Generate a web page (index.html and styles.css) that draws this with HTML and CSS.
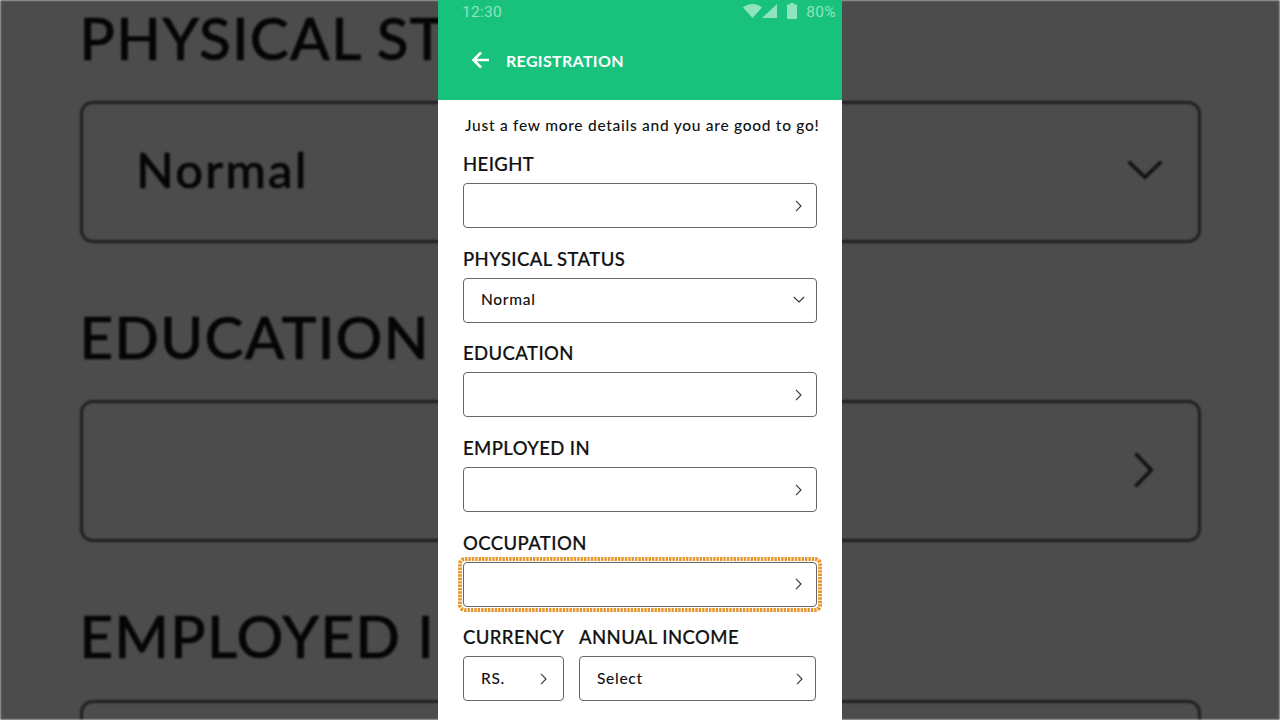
FILE: index.html
```html
<!DOCTYPE html>
<html lang="en">
<head>
    <meta charset="UTF-8">
    <meta name="viewport" content="width=device-width, initial-scale=1.0">
    <title>Registration</title>
    <link rel="stylesheet" href="styles.css">
</head>
<body>

<div class="page">

    <!-- blurred enlarged copy of the form behind the phone -->
    <div class="backdrop">
        <div class="form form-large">
            <p class="label">PHYSICAL ST</p>
            <div class="box">
                <span>Normal</span>
                <svg class="icon" viewBox="0 0 12 12"><path d="M.8 3l5.200 5 5.200-5"/></svg>
            </div>
            <p class="label">EDUCATION</p>
            <div class="box">
                <svg class="icon" viewBox="0 0 12 12"><path d="M3 .8l5 5.200-5 5.200"/></svg>
            </div>
            <p class="label">EMPLOYED I</p>
            <div class="box">
                <svg class="icon" viewBox="0 0 12 12"><path d="M3 .8l5 5.200-5 5.200"/></svg>
            </div>
        </div>
    </div>

    <main class="phone">
        <header class="appbar">
            <div class="status">
                <span>12:30</span>
                <div class="status-right">
                    <svg class="wifi" viewBox="0 0 19 14"><path d="M0 3.500C2.500 1.300 5.800 0 9.500 0s7 1.300 9.500 3.500L9.500 14z"/></svg>
                    <svg class="signal" viewBox="0 0 15 14"><path d="M15 0v14H0z"/></svg>
                    <svg class="battery" viewBox="0 0 10 16"><path d="M3 0h4v1.500h3V16H0V1.500h3z"/></svg>
                    <span>80%</span>
                </div>
            </div>
            <div class="toolbar">
                <svg class="back" viewBox="0 0 24 24"><path d="M20 12H5M12 4.500L4.500 12l7.500 7.500"/></svg>
                <span class="title">REGISTRATION</span>
            </div>
        </header>

        <p class="intro">Just a few more details and you are good to go!</p>

        <div class="form">
            <p class="label">HEIGHT</p>
            <div class="box">
                <svg class="icon" viewBox="0 0 12 12"><path d="M3 .8l5 5.200-5 5.200"/></svg>
            </div>

            <p class="label">PHYSICAL STATUS</p>
            <div class="box">
                <span>Normal</span>
                <svg class="icon" viewBox="0 0 12 12"><path d="M.8 3l5.200 5 5.200-5"/></svg>
            </div>

            <p class="label">EDUCATION</p>
            <div class="box">
                <svg class="icon" viewBox="0 0 12 12"><path d="M3 .8l5 5.200-5 5.200"/></svg>
            </div>

            <p class="label">EMPLOYED IN</p>
            <div class="box">
                <svg class="icon" viewBox="0 0 12 12"><path d="M3 .8l5 5.200-5 5.200"/></svg>
            </div>

            <p class="label">OCCUPATION</p>
            <div class="box box-focus">
                <svg class="icon" viewBox="0 0 12 12"><path d="M3 .8l5 5.200-5 5.200"/></svg>
                <svg class="focus-ring" viewBox="0 0 364 55"><rect x="2" y="2" width="360" height="51" rx="5"/></svg>
            </div>

            <div class="row">
                <div class="col-currency">
                    <p class="label">CURRENCY</p>
                    <div class="box">
                        <span>RS.</span>
                        <svg class="icon" viewBox="0 0 12 12"><path d="M3 .8l5 5.200-5 5.200"/></svg>
                    </div>
                </div>
                <div class="col-income">
                    <p class="label">ANNUAL INCOME</p>
                    <div class="box">
                        <span>Select</span>
                        <svg class="icon" viewBox="0 0 12 12"><path d="M3 .8l5 5.200-5 5.200"/></svg>
                    </div>
                </div>
            </div>
        </div>
    </main>

</div>

</body>
</html>
```

FILE: styles.css
```css
body {
    margin: 0;
    font-family: Lato, "Open Sans", sans-serif;
    color: #111;
}
p {
    margin: 0;
}
.page {
    display: grid;
    width: 1280px;
    height: 720px;
    overflow: hidden;
}
.backdrop,
.phone {
    grid-area: 1 / 1;
}
.backdrop {
    background: #fff;
    padding-left: 79.500px;
    filter: brightness(0.3) blur(1px);
    overflow: hidden;
}
.phone {
    position: relative;
    justify-self: center;
    width: 404px;
    background: #fff;
    overflow: hidden;
}
.appbar {
    height: 100px;
    background: #19c27c;
}
.status {
    display: flex;
    justify-content: space-between;
    align-items: center;
    height: 22px;
    padding: 0 6px 0 24px;
    font-family: Roboto, sans-serif;
    font-size: 15.500px;
    color: #8fe3c1;
    letter-spacing: 0.3px;
}
.status span {
    padding-top: 2px;
}
.status-right {
    display: flex;
    align-items: center;
}
.status-right svg {
    fill: #8fe3c1;
    display: block;
}
.wifi {
    width: 19px;
    height: 14px;
}
.signal {
    width: 15px;
    height: 14px;
}
.battery {
    width: 10px;
    height: 16px;
    margin: 0 9px 0 10px;
}
.toolbar {
    display: flex;
    align-items: center;
    height: 76px;
    padding-left: 31px;
}
.back {
    width: 24px;
    height: 24px;
    fill: none;
    stroke: #fff;
    stroke-width: 2.500;
}
.title {
    margin-left: 13px;
    font-size: 16px;
    font-weight: 700;
    letter-spacing: 0.33px;
    color: #fff;
}
.intro {
    margin: 15px 0 17px 27px;
    font-size: 15.500px;
    line-height: 20px;
    font-weight: 500;
    letter-spacing: 0.73px;
    color: #111;
    white-space: nowrap;
}
.form {
    width: 354px;
    margin-left: 25px;
}
.form-large {
    zoom: 3.16;
    margin-left: 0;
    width: 355px;
}
.label {
    height: 24px;
    line-height: 24px;
    margin-bottom: 7px;
    font-size: 18.500px;
    font-weight: 500;
    letter-spacing: 0.4px;
    white-space: nowrap;
    -webkit-text-stroke: 0.2px #111;
}
.box {
    position: relative;
    display: flex;
    justify-content: space-between;
    align-items: center;
    box-sizing: border-box;
    height: 45px;
    margin-bottom: 18.700px;
    padding: 0 11px 0 17px;
    border: 1px solid #666;
    border-radius: 4px;
    background: #fff;
    font-size: 15.500px;
    font-weight: 500;
    letter-spacing: 0.7px;
}
.box span {
    padding-bottom: 2px;
}
.form-large .label {
    margin-bottom: 8px;
}
.form-large .box {
    margin-bottom: 17.700px;
    -webkit-text-stroke: 0.2px #111;
}
.form-large .icon {
    margin-top: -1px;
}
.icon {
    width: 12px;
    height: 12px;
    margin-left: auto;
    fill: none;
    stroke: #333;
    stroke-width: 1.100;
}
.focus-ring {
    position: absolute;
    left: -6px;
    top: -6px;
    width: 364px;
    height: 55px;
    fill: none;
    stroke: #e8962c;
    stroke-width: 4;
    stroke-dasharray: 2.400 1;
}
.row {
    display: flex;
    gap: 15px;
}
.col-currency {
    width: 101px;
    flex: none;
}
.col-currency .box {
    padding-right: 13.500px;
}
.col-income {
    width: 237px;
    flex: none;
}
.col-income .box {
    padding-right: 9px;
}
```
